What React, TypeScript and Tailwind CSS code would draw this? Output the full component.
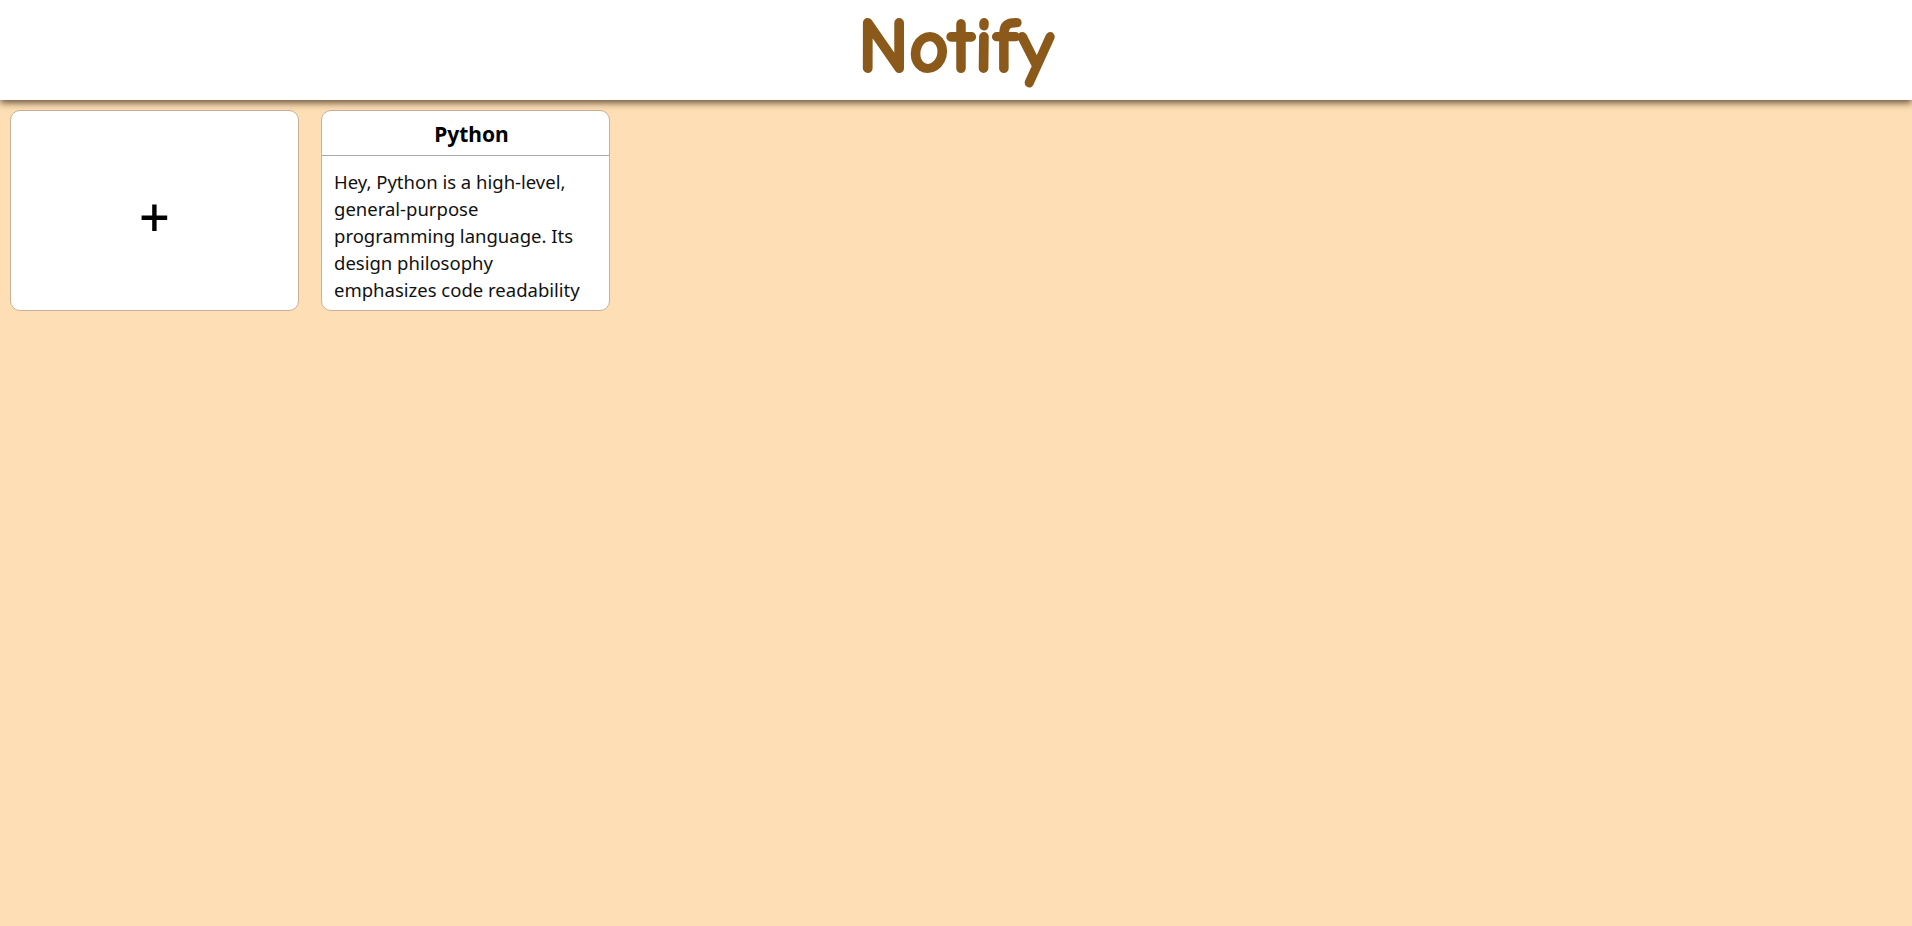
import React from "react";

export default function App() {
  return (
    <div className="min-h-[926px] w-full bg-[#fedeb5]">
      <header className="relative z-10 flex h-[100px] items-center justify-center bg-white shadow-[0_3px_7px_rgba(60,40,20,0.75)]">
        <h1 className="-mt-[6px] text-[78px] font-bold leading-none text-[#8b5a1b] [font-family:'Comic_Sans_MS','Comic_Neue','Chalkboard',cursive] [-webkit-text-stroke:2px_#8b5a1b]">
          Notify
        </h1>
      </header>
      <main className="flex flex-wrap gap-[22px] px-[10px] pt-[10px] [font-family:'Segoe_UI','Noto_Sans',sans-serif]">
        <button className="flex h-[201px] w-[289px] items-center justify-center rounded-[10px] border border-[#c9b197] bg-white pt-[10px] text-[54px] font-medium leading-none text-black">
          +
        </button>
        <div className="flex h-[201px] w-[289px] flex-col overflow-hidden rounded-[10px] border border-[#c9b197] bg-white">
          <div className="flex h-[45px] items-center justify-center border-b border-[#a8a8a8] pl-[12px] pt-[3px] text-[21px] font-bold text-black">
            Python
          </div>
          <p className="px-[12px] pt-[12px] text-[18.5px] leading-[27px] text-[#111]">
            Hey, Python is a high-level, general-purpose programming language. Its design philosophy emphasizes code readability
          </p>
        </div>
      </main>
    </div>
  );
}
